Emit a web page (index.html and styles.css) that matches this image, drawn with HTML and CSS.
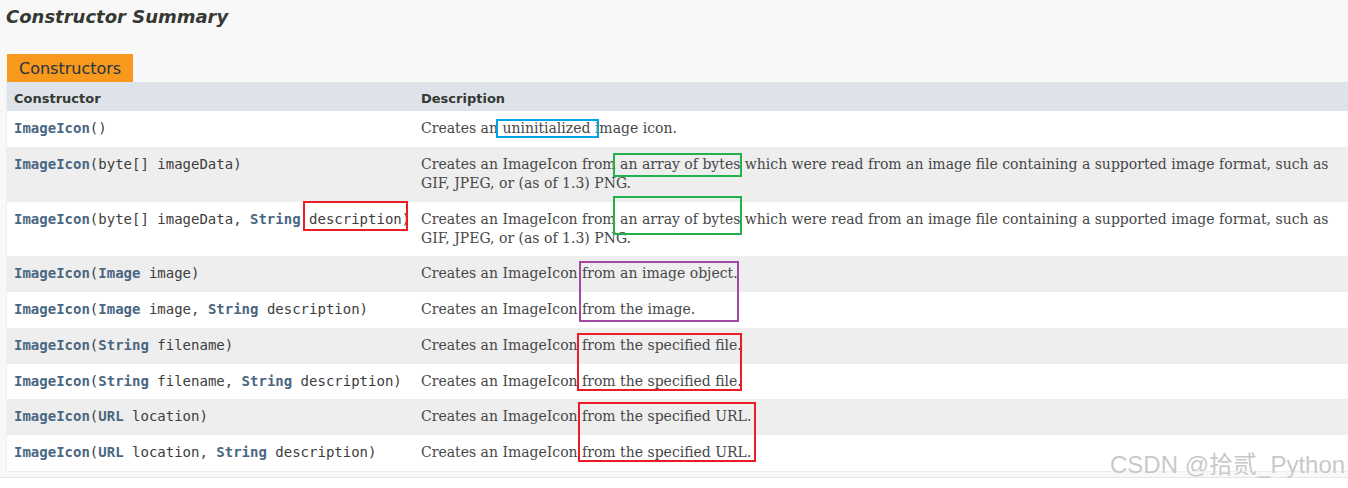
FILE: index.html
```html
<!DOCTYPE html>
<html lang="en">
<head>
<meta charset="utf-8">
<title>Constructor Summary</title>
<link rel="stylesheet" href="styles.css">
</head>
<body>
<div class="page">
  <h3 class="title">Constructor Summary</h3>
  <div class="tab">Constructors</div>
  <div class="table">
    <div class="th">Constructor</div>
    <div class="th">Description</div>

    <div class="cell code r-even"><a class="lnk">ImageIcon</a>()</div>
    <div class="cell desc r-even">Creates an uninitialized image icon.</div>

    <div class="cell code r-odd"><a class="lnk">ImageIcon</a>(byte[]&nbsp;imageData)</div>
    <div class="cell desc r-odd">Creates an ImageIcon from an array of bytes which were read from an image file containing a supported image format, such as GIF, JPEG, or (as of 1.3) PNG.</div>

    <div class="cell code r-even"><a class="lnk">ImageIcon</a>(byte[]&nbsp;imageData, <a class="lnk">String</a>&nbsp;description)</div>
    <div class="cell desc r-even">Creates an ImageIcon from an array of bytes which were read from an image file containing a supported image format, such as GIF, JPEG, or (as of 1.3) PNG.</div>

    <div class="cell code r-odd"><a class="lnk">ImageIcon</a>(<a class="lnk">Image</a>&nbsp;image)</div>
    <div class="cell desc r-odd">Creates an ImageIcon from an image object.</div>

    <div class="cell code r-even"><a class="lnk">ImageIcon</a>(<a class="lnk">Image</a>&nbsp;image, <a class="lnk">String</a>&nbsp;description)</div>
    <div class="cell desc r-even">Creates an ImageIcon from the image.</div>

    <div class="cell code r-odd"><a class="lnk">ImageIcon</a>(<a class="lnk">String</a>&nbsp;filename)</div>
    <div class="cell desc r-odd">Creates an ImageIcon from the specified file.</div>

    <div class="cell code r-even"><a class="lnk">ImageIcon</a>(<a class="lnk">String</a>&nbsp;filename, <a class="lnk">String</a>&nbsp;description)</div>
    <div class="cell desc r-even">Creates an ImageIcon from the specified file.</div>

    <div class="cell code r-odd"><a class="lnk">ImageIcon</a>(<a class="lnk">URL</a>&nbsp;location)</div>
    <div class="cell desc r-odd">Creates an ImageIcon from the specified URL.</div>

    <div class="cell code r-even"><a class="lnk">ImageIcon</a>(<a class="lnk">URL</a>&nbsp;location, <a class="lnk">String</a>&nbsp;description)</div>
    <div class="cell desc r-even">Creates an ImageIcon from the specified URL.</div>
  </div>
  <div class="footer"></div>

  <div class="mark mark-blue box-1"></div>
  <div class="mark mark-green box-2"></div>
  <div class="mark mark-green box-3"></div>
  <div class="mark mark-red box-4"></div>
  <div class="mark mark-purple box-5"></div>
  <div class="mark mark-red box-6"></div>
  <div class="mark mark-red box-7"></div>

  <div class="watermark">CSDN @拾贰_Python</div>
</div>
</body>
</html>
```

FILE: styles.css
```css
html, body {
  margin: 0;
  padding: 0;
  background: #f8f8f8;
  overflow: hidden;
}

.page {
  position: relative;
  padding: 6px 0 0 6px;
  height: 482px;
  color: #353833;
  font-family: "DejaVu Sans", Arial, sans-serif;
}

.title {
  margin: 0 0 27px 0;
  font-size: 18px;
  line-height: 21px;
  font-weight: bold;
  font-style: italic;
  color: #353833;
}

.tab {
  display: inline-block;
  margin-left: 1px;
  padding: 5px 12px 4px 12px;
  font-size: 16px;
  line-height: 19px;
  background: #f8981d;
  color: #253441;
}

.table {
  display: grid;
  grid-template-columns: 407px 1fr;
  margin-right: -4px;
  border-left: 1px solid #eeeeee;
  border-bottom: 1px solid #eeeeee;
}

.th {
  background: #dee3e9;
  font-size: 13px;
  font-weight: bold;
  line-height: 15px;
  padding: 9px 3px 5px 7px;
}

.cell {
  padding: 8px 3px 8.75px 7px;
  font-size: 14px;
  line-height: 19px;
}

.r-even { background: #ffffff; }
.r-odd { background: #eeeeee; }

.code {
  font-family: "DejaVu Sans Mono", "Liberation Mono", monospace;
  white-space: nowrap;
  color: #3d3d3d;
}

.lnk {
  font-weight: bold;
  color: #4a6782;
  text-decoration: none;
}

.desc {
  font-family: "DejaVu Serif", Georgia, "Liberation Serif", serif;
  color: #474747;
}

.footer {
  margin: 5px 0 0 -6px;
  border-top: 1px solid #e6e6e6;
  background: #ffffff;
  height: 20px;
}

.mark {
  position: absolute;
  box-sizing: border-box;
  border: 2px solid;
}
.mark-blue { border-color: #00a2e8; }
.mark-green { border-color: #22b14c; }
.mark-red { border-color: #ed1c24; }
.mark-purple { border-color: #a349a4; }

.box-1 { left: 496px; top: 119px; width: 103px; height: 19px; }
.box-2 { left: 613px; top: 153px; width: 129px; height: 24px; }
.box-3 { left: 613px; top: 196px; width: 129px; height: 39px; }
.box-4 { left: 303px; top: 201px; width: 105px; height: 30px; }
.box-5 { left: 579px; top: 261px; width: 160px; height: 61px; }
.box-6 { left: 577px; top: 333px; width: 165px; height: 58px; }
.box-7 { left: 578px; top: 402px; width: 178px; height: 60px; }

.watermark {
  position: absolute;
  left: 1110px;
  top: 450px;
  font-family: "Liberation Sans", "Noto Sans CJK SC", sans-serif;
  font-size: 24px;
  line-height: 30px;
  color: rgba(175, 175, 175, 0.7);
  text-shadow: 0 0 2px #ffffff, 0 0 1px #ffffff;
  white-space: nowrap;
}
```
